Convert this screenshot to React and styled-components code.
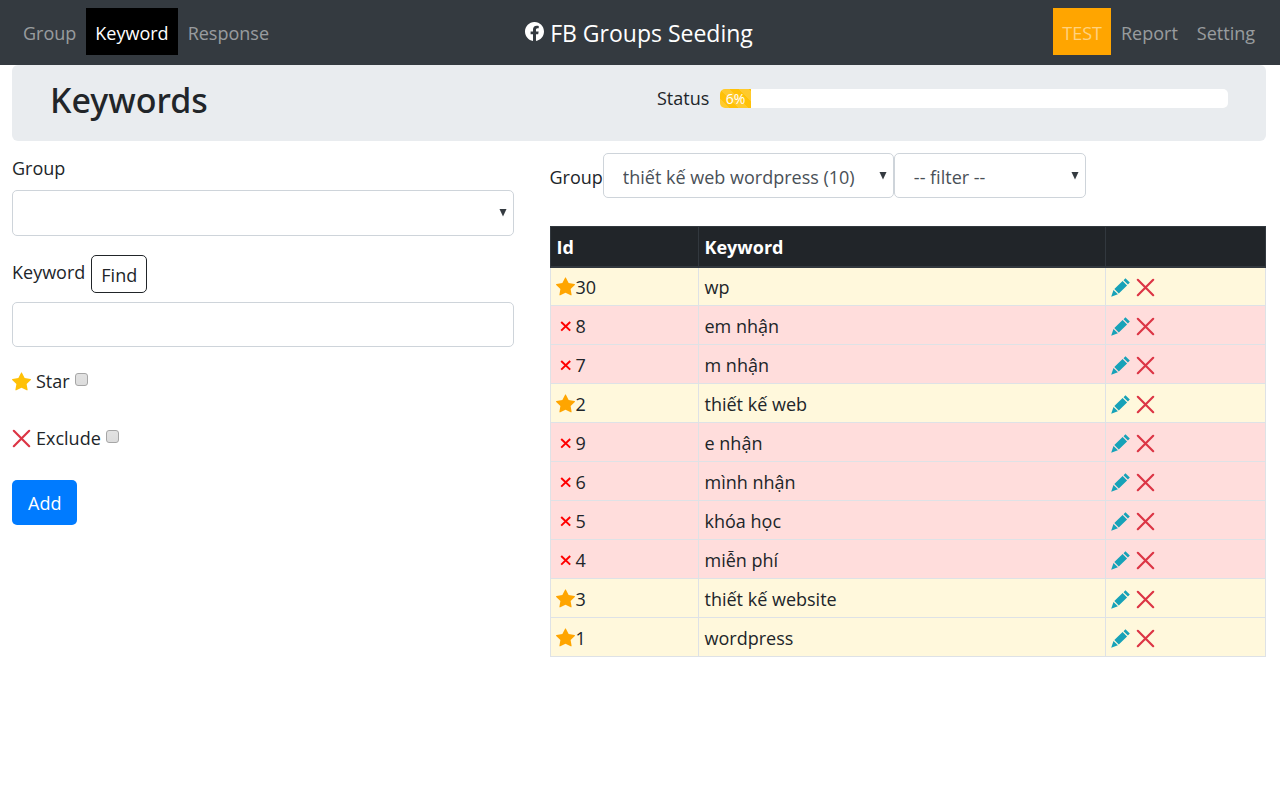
import React from "react";
import styled, { createGlobalStyle } from "styled-components";
import { BsFacebook, BsStarFill } from "react-icons/bs";

const GlobalStyle = createGlobalStyle`
  *, *::before, *::after { box-sizing: border-box; }
  body {
    margin: 0;
    background: #fff;
    color: #212529;
    font-family: "Open Sans", "Noto Sans", sans-serif;
    font-size: 18px;
    line-height: 28px;
  }
  button, input, select { font: inherit; }
`;

const Navbar = styled.nav`
  display: grid;
  grid-template-columns: 1fr auto 1fr;
  align-items: center;
  padding: 8px 16px 10px 14px;
  background: #343a40;
`;

const NavGroup = styled.div`
  display: flex;
  gap: 1px;
  justify-content: ${(p) => (p.$end ? "flex-end" : "flex-start")};
`;

const NavLink = styled.a`
  padding: 11px 9px 8px;
  color: ${(p) => (p.$active ? "#fff" : "rgba(255, 255, 255, 0.5)")};
  background: ${(p) => (p.$active ? "#000" : p.$test ? "#ffa500" : "transparent")};
  text-decoration: none;
`;

const Brand = styled.a`
  display: flex;
  align-items: center;
  gap: 6px;
  padding-top: 3px;
  color: #fff;
  font-size: 23px;
  text-decoration: none;
  svg { margin-bottom: 3px; }
`;

const Page = styled.main`
  padding: 0 14px 0 12px;
`;

const Banner = styled.header`
  display: grid;
  grid-template-columns: 1fr 1fr;
  gap: 36px;
  min-height: 76px;
  padding: 13px 38px;
  background: #e9ecef;
  border-radius: 6px;
`;

const Title = styled.h1`
  margin: 0;
  font-family: "Noto Sans", "Open Sans", sans-serif;
  font-size: 34px;
  line-height: 44px;
  font-weight: 500;
`;

const Status = styled.div`
  display: flex;
  gap: 11px;
  padding-top: 6px;
`;

const Track = styled.div`
  flex: 1;
  height: 19px;
  margin-top: 5px;
  overflow: hidden;
  background: #fff;
  border-radius: 5px;
`;

const Bar = styled.div`
  height: 100%;
  color: #fff;
  font-size: 14px;
  line-height: 20px;
  text-align: center;
  background: #ffc107 linear-gradient(45deg, rgba(255, 255, 255, 0.15) 25%, transparent 25%, transparent 50%, rgba(255, 255, 255, 0.15) 50%, rgba(255, 255, 255, 0.15) 75%, transparent 75%, transparent) 0 0 / 19px 19px;
`;

const Columns = styled.div`
  display: grid;
  grid-template-columns: minmax(0, 7fr) minmax(0, 10fr);
  gap: 36px;
  padding-top: 12px;
`;

const Form = styled.form`
  display: flex;
  flex-direction: column;
  align-items: stretch;
  padding-top: 1px;
`;

const Field = styled.div`
  display: flex;
  flex-direction: column;
  gap: ${(p) => p.$gap}px;
  margin-bottom: ${(p) => (p.$last ? 20 : 19)}px;
`;

const LabelLine = styled.div`
  display: flex;
  align-items: center;
  gap: 6px;
  label { padding-bottom: 4px; }
`;

const SelectBox = styled.div`
  display: grid;
  align-items: center;
  width: ${(p) => p.$width || "auto"};
  svg {
    grid-area: 1 / 1;
    justify-self: end;
    margin-right: 7px;
    pointer-events: none;
  }
`;

const Select = styled.select`
  grid-area: 1 / 1;
  width: 100%;
  height: ${(p) => p.$height || 45}px;
  padding: 2px 19px 0;
  color: #495057;
  background: #fff;
  border: 1px solid #ced4da;
  border-radius: 5px;
  appearance: none;
`;

const TextInput = styled.input`
  width: 100%;
  height: 45px;
  padding: 2px 14px 0;
  color: #495057;
  border: 1px solid #ced4da;
  border-radius: 5px;
`;

const FindButton = styled.button`
  height: 38px;
  padding: 2px 9px 0;
  color: #212529;
  background: #fff;
  border: 1px solid #212529;
  border-radius: 5px;
`;

const AddButton = styled.button`
  align-self: flex-start;
  height: 45px;
  padding: 1px 16px 0;
  color: #fff;
  background: #007bff;
  border: 0;
  border-radius: 5px;
`;

const CheckLabel = styled.label`
  display: flex;
  align-items: center;
  gap: 5px;
  margin-bottom: 29px;
  &:last-of-type { margin-bottom: 28px; }
`;

const Checkbox = styled.input`
  width: 13px;
  height: 13px;
  margin: 0 0 3px;
  appearance: none;
  background: linear-gradient(#e2e2e2, #dcdcdc);
  border: 1px solid #a6a6a6;
  border-radius: 3px;
`;

const Filters = styled.div`
  display: flex;
  align-items: center;
  margin-bottom: 28px;
  label { padding-top: 3px; }
`;

const Table = styled.table`
  width: 100%;
  table-layout: fixed;
  border-collapse: collapse;
`;

const Head = styled.th`
  width: ${(p) => p.$width || "auto"};
  height: 40px;
  padding: 2px 6px 0;
  color: #fff;
  background: #212529;
  border: 1px solid #32383e;
  border-bottom-width: 2px;
  text-align: left;
  font-weight: 700;
`;

const Row = styled.tr`
  background: ${(p) => (p.$star ? "#fff8dc" : "#ffdddc")};
`;

const Cell = styled.td`
  height: 39px;
  padding: 1px 6px 0 ${(p) => (p.$icons ? 5 : 6)}px;
  border: 1px solid #dee2e6;
`;

const Mark = styled.span`
  display: flex;
  align-items: center;
  gap: 1px;
  svg { flex: none; }
`;

const Actions = styled.div`
  display: flex;
  align-items: center;
  gap: 6px;
  padding-top: 1px;
`;

const IconButton = styled.button`
  display: flex;
  padding: 0;
  background: none;
  border: 0;
`;

const Arrow = () => (
  <svg width="8" height="12" viewBox="0 0 8 12" aria-hidden="true">
    <path d="M0.5 2h7L4 9.5z" fill="#343a40" />
  </svg>
);

const Cross = () => (
  <svg width="19" height="19" viewBox="0 0 19 19" aria-hidden="true">
    <path d="M1.8 1.8l15.4 15.4M17.2 1.8L1.8 17.2" stroke="#dc3545" strokeWidth="2.2" strokeLinecap="round" />
  </svg>
);

const SmallCross = () => (
  <svg width="19" height="19" viewBox="0 0 19 19" aria-hidden="true">
    <path d="M5.2 6l9 8.6M14.2 6l-9 8.6" stroke="#f00" strokeWidth="2" />
  </svg>
);

const Pencil = () => (
  <svg width="19" height="19" viewBox="0 0 20 20" aria-hidden="true">
    <path d="M15.2 0.2L19.8 4.8 17.8 6.9 13.2 2.3zM12.2 3.1L16.9 7.8 8.2 16.4 3.5 11.7zM2.6 12.6L7.3 17.2 0.2 19.8z" fill="#17a2b8" />
  </svg>
);

const rows = [
  [30, "wp", true],
  [8, "em nhận", false],
  [7, "m nhận", false],
  [2, "thiết kế web", true],
  [9, "e nhận", false],
  [6, "mình nhận", false],
  [5, "khóa học", false],
  [4, "miễn phí", false],
  [3, "thiết kế website", true],
  [1, "wordpress", true],
];

const progress = 6;

export default function App() {
  return (
    <>
      <GlobalStyle />
      <Navbar>
        <NavGroup>
          <NavLink href="#group">Group</NavLink>
          <NavLink href="#keyword" $active>Keyword</NavLink>
          <NavLink href="#response">Response</NavLink>
        </NavGroup>
        <Brand href="#home"><BsFacebook size={19} />FB Groups Seeding</Brand>
        <NavGroup $end>
          <NavLink href="#test" $test>TEST</NavLink>
          <NavLink href="#report">Report</NavLink>
          <NavLink href="#setting">Setting</NavLink>
        </NavGroup>
      </Navbar>
      <Page>
        <Banner>
          <Title>Keywords</Title>
          <Status>
            <span>Status</span>
            <Track>
              <Bar role="progressbar" aria-label="Status" aria-valuenow={progress} style={{ width: `${progress}%` }}>{progress}%</Bar>
            </Track>
          </Status>
        </Banner>
        <Columns>
          <Form onSubmit={(e) => e.preventDefault()}>
            <Field $gap={8}>
              <label htmlFor="group">Group</label>
              <SelectBox>
                <Select id="group" $height={46}><option></option></Select>
                <Arrow />
              </SelectBox>
            </Field>
            <Field $gap={9} $last>
              <LabelLine>
                <label htmlFor="keyword">Keyword</label>
                <FindButton type="button">Find</FindButton>
              </LabelLine>
              <TextInput id="keyword" type="text" />
            </Field>
            <CheckLabel>
              <BsStarFill size={19} color="#ffc107" />Star<Checkbox type="checkbox" />
            </CheckLabel>
            <CheckLabel>
              <Cross />Exclude<Checkbox type="checkbox" />
            </CheckLabel>
            <AddButton type="submit">Add</AddButton>
          </Form>
          <section>
            <Filters>
              <label htmlFor="filter-group">Group</label>
              <SelectBox $width="291px">
                <Select id="filter-group"><option>thiết kế web wordpress (10)</option></Select>
                <Arrow />
              </SelectBox>
              <SelectBox $width="192px">
                <Select aria-label="Filter"><option>-- filter --</option></Select>
                <Arrow />
              </SelectBox>
            </Filters>
            <Table>
              <thead>
                <tr>
                  <Head $width="148px">Id</Head>
                  <Head>Keyword</Head>
                  <Head $width="160px" aria-label="Actions" />
                </tr>
              </thead>
              <tbody>
                {rows.map(([id, word, star]) => (
                  <Row key={id} $star={star}>
                    <Cell $icons>
                      <Mark>{star ? <BsStarFill size={19} color="#ffa500" /> : <SmallCross />}{id}</Mark>
                    </Cell>
                    <Cell>{word}</Cell>
                    <Cell $icons>
                      <Actions>
                        <IconButton type="button" aria-label={`Edit ${word}`}><Pencil /></IconButton>
                        <IconButton type="button" aria-label={`Delete ${word}`}><Cross /></IconButton>
                      </Actions>
                    </Cell>
                  </Row>
                ))}
              </tbody>
            </Table>
          </section>
        </Columns>
      </Page>
    </>
  );
}
